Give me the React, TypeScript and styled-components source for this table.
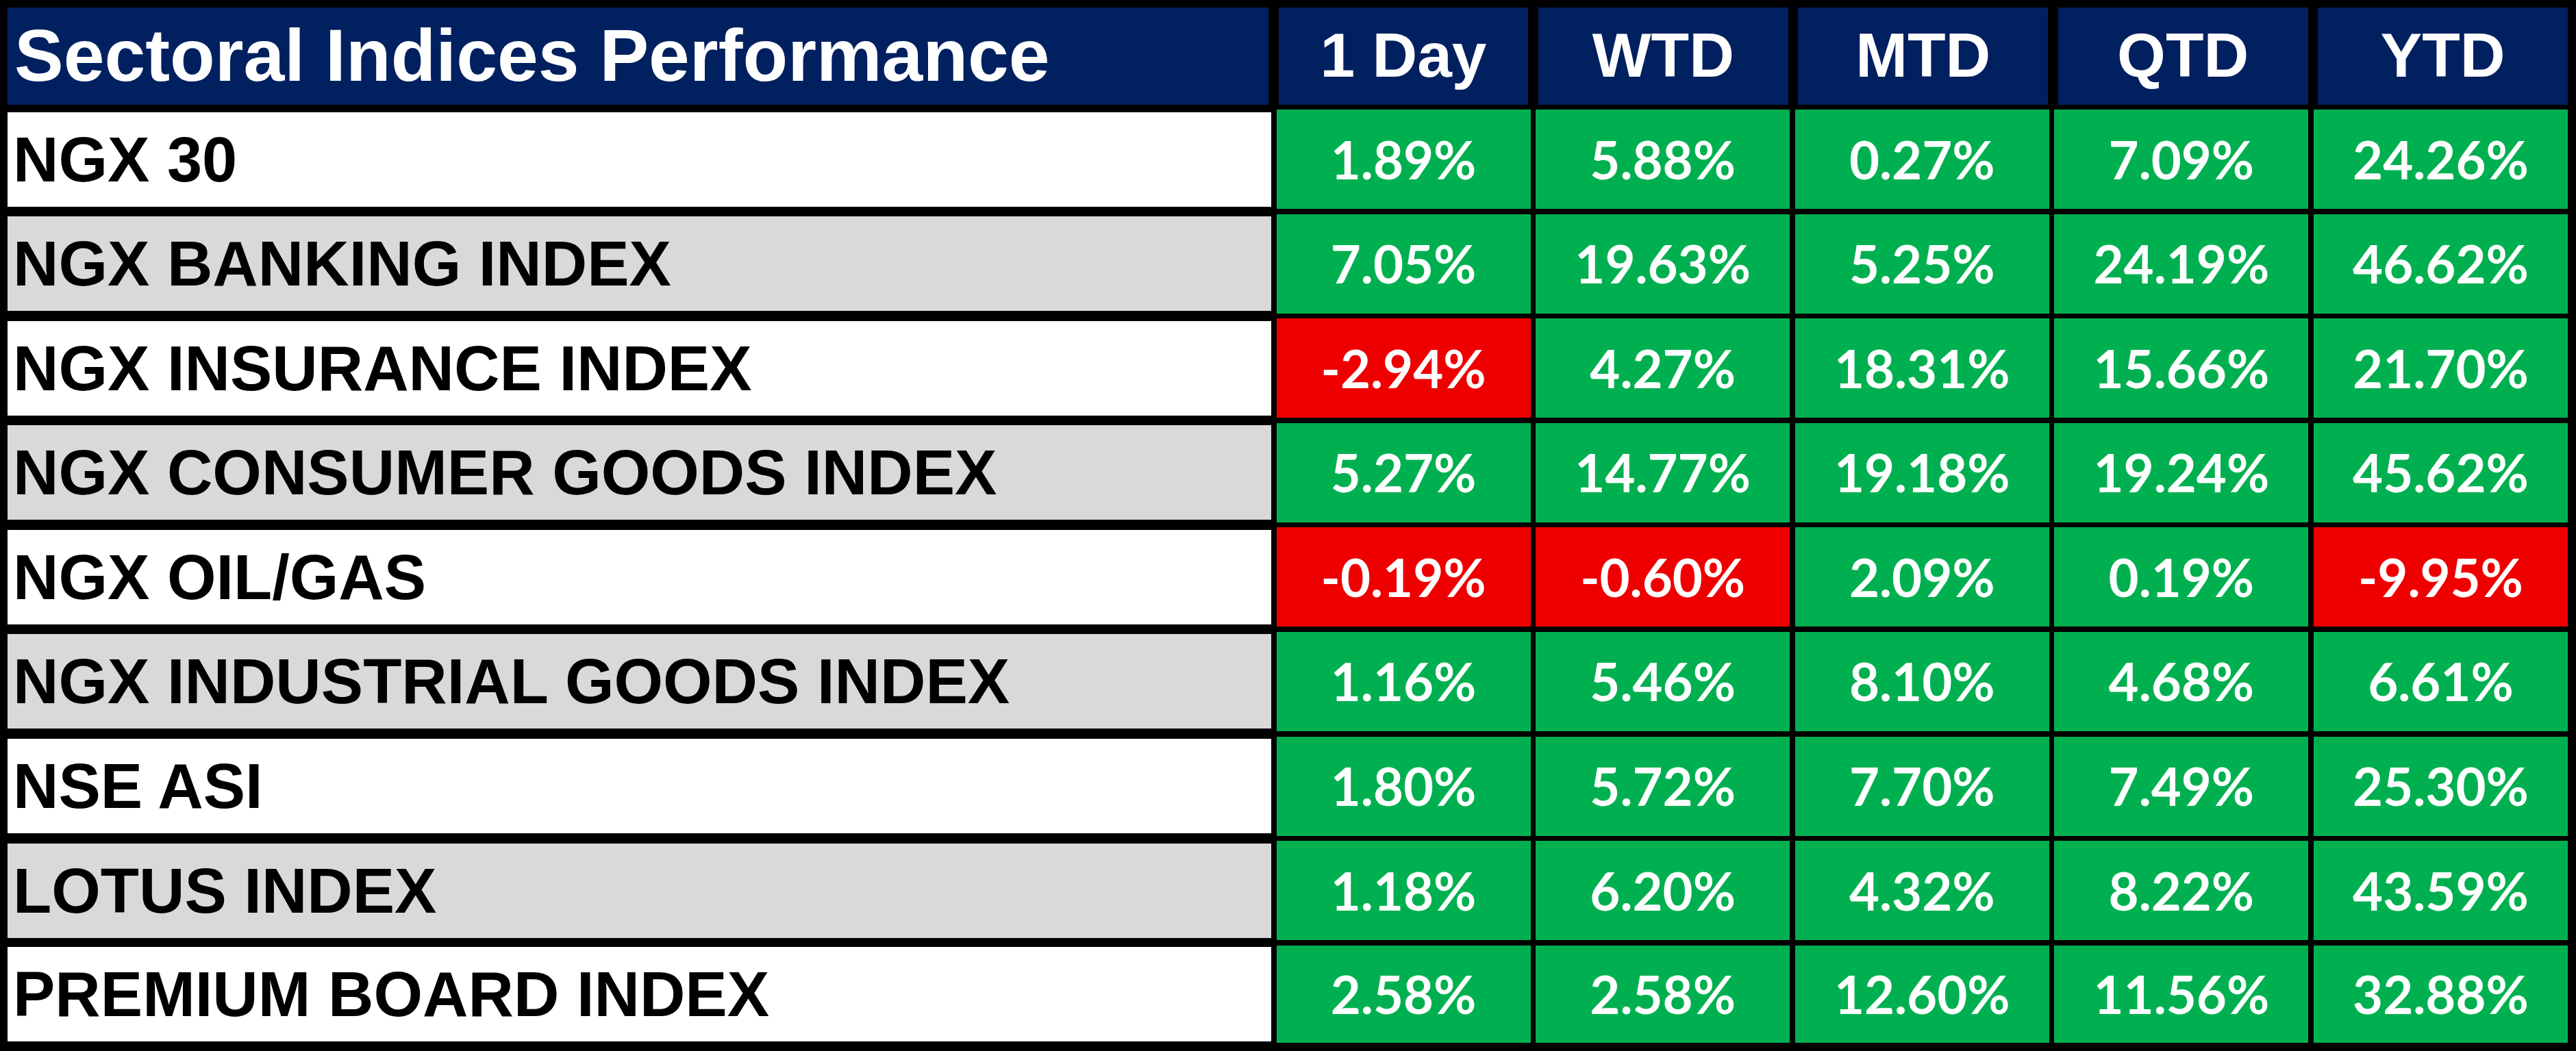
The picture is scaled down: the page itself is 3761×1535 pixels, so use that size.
import React from "react";
import styled, { createGlobalStyle } from "styled-components";

const GlobalStyle = createGlobalStyle`
  html, body {
    margin: 0;
    padding: 0;
    background: #000000;
  }
  * {
    box-sizing: border-box;
  }
`;

const Frame = styled.div`
  width: 3761px;
  height: 1535px;
  background: #000000;
  padding: 11px 12px 12px 11px;
  display: flex;
  flex-direction: column;
  gap: 7px;
  overflow: hidden;
`;

const HeaderRow = styled.div`
  display: grid;
  grid-template-columns: 1841px repeat(5, 1fr);
  column-gap: 14.5px;
  height: 142px;
`;

const TitleCell = styled.div`
  background: #002060;
  color: #ffffff;
  display: flex;
  align-items: center;
  padding-left: 10px;
  font-family: "Liberation Sans", Arial, sans-serif;
  font-weight: 700;
  font-size: 107.5px;
  line-height: 1;
  white-space: nowrap;
`;

const PeriodCell = styled.div`
  background: #002060;
  color: #ffffff;
  display: flex;
  align-items: center;
  justify-content: center;
  font-family: "Liberation Sans", Arial, sans-serif;
  font-weight: 700;
  font-size: 91px;
  line-height: 1;
  padding-bottom: 4px;
  white-space: nowrap;
`;

const Body = styled.div`
  display: grid;
  grid-template-columns: 1845px repeat(5, 1fr);
  grid-template-rows: repeat(8, 145px) 142px;
  column-gap: 7.5px;
  row-gap: 7.6px;
`;

const LabelCell = styled.div<{ $shaded: boolean }>`
  background: ${(p) => (p.$shaded ? "#D9D9D9" : "#FFFFFF")};
  color: #000000;
  height: 138px;
  align-self: center;
  display: flex;
  align-items: center;
  padding-left: 8px;
  font-family: "Liberation Sans", Arial, sans-serif;
  font-weight: 700;
  font-size: 92px;
  line-height: 1;
  white-space: nowrap;
`;

const ValueCell = styled.div<{ $negative: boolean }>`
  background: ${(p) => (p.$negative ? "#EE0000" : "#00B050")};
  color: #ffffff;
  display: flex;
  align-items: center;
  justify-content: center;
  font-family: Lato, "Open Sans", sans-serif;
  font-weight: 700;
  font-size: 76px;
  line-height: 1;
  white-space: nowrap;
`;

const periods = ["1 Day", "WTD", "MTD", "QTD", "YTD"];

const rows: { name: string; values: string[] }[] = [
  { name: "NGX 30", values: ["1.89%", "5.88%", "0.27%", "7.09%", "24.26%"] },
  { name: "NGX BANKING INDEX", values: ["7.05%", "19.63%", "5.25%", "24.19%", "46.62%"] },
  { name: "NGX INSURANCE INDEX", values: ["-2.94%", "4.27%", "18.31%", "15.66%", "21.70%"] },
  { name: "NGX CONSUMER GOODS INDEX", values: ["5.27%", "14.77%", "19.18%", "19.24%", "45.62%"] },
  { name: "NGX OIL/GAS", values: ["-0.19%", "-0.60%", "2.09%", "0.19%", "-9.95%"] },
  { name: "NGX INDUSTRIAL GOODS INDEX", values: ["1.16%", "5.46%", "8.10%", "4.68%", "6.61%"] },
  { name: "NSE ASI", values: ["1.80%", "5.72%", "7.70%", "7.49%", "25.30%"] },
  { name: "LOTUS INDEX", values: ["1.18%", "6.20%", "4.32%", "8.22%", "43.59%"] },
  { name: "PREMIUM BOARD INDEX", values: ["2.58%", "2.58%", "12.60%", "11.56%", "32.88%"] },
];

export default function App() {
  return (
    <>
      <GlobalStyle />
      <Frame>
        <HeaderRow>
          <TitleCell>Sectoral Indices Performance</TitleCell>
          {periods.map((p) => (
            <PeriodCell key={p}>{p}</PeriodCell>
          ))}
        </HeaderRow>
        <Body>
          {rows.map((row, i) => (
            <React.Fragment key={row.name}>
              <LabelCell $shaded={i % 2 === 1}>{row.name}</LabelCell>
              {row.values.map((v, j) => (
                <ValueCell key={j} $negative={v.startsWith("-")}>
                  {v}
                </ValueCell>
              ))}
            </React.Fragment>
          ))}
        </Body>
      </Frame>
    </>
  );
}
